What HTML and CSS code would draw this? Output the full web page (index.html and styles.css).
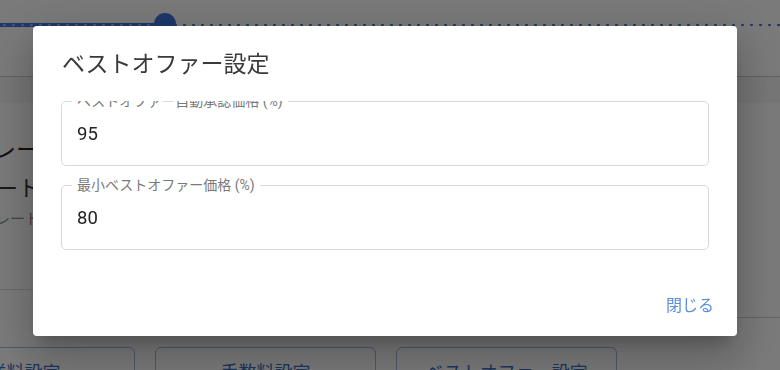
FILE: index.html
```html
<!DOCTYPE html>
<html lang="ja">
<head>
  <meta charset="UTF-8">
  <meta name="viewport" content="width=device-width, initial-scale=1.0">
  <title>ベストオファー設定</title>
  <link rel="stylesheet" href="styles.css">
</head>
<body>
  <div class="page">
    <div class="topbar"></div>
    <div class="track">
      <div class="track-fill"></div>
      <div class="knob"></div>
    </div>
    <div class="header"></div>
    <div class="subbar"></div>
    <div class="main">
      <div class="side">
        <div class="side-title">オファーレー</div>
        <div class="side-sub">ベストオファーレート</div>
        <div class="side-note">自動承認レート</div>
      </div>
      <div class="panel"></div>
    </div>
    <div class="actions-row">
      <button class="outline-btn">送料設定</button>
      <button class="outline-btn">手数料設定</button>
      <button class="outline-btn">ベストオファー設定</button>
    </div>
  </div>

  <div class="backdrop">
    <div class="dialog">
      <h2 class="dialog-title">ベストオファー設定</h2>
      <div class="dialog-content">
        <div class="field">
          <span class="field-label">ベストオファー自動承認価格 (%)</span>
          <div class="field-value">95</div>
        </div>
        <div class="field">
          <span class="field-label">最小ベストオファー価格 (%)</span>
          <div class="field-value">80</div>
        </div>
      </div>
      <div class="dialog-actions">
        <button class="text-btn">閉じる</button>
      </div>
    </div>
  </div>
</body>
</html>
```

FILE: styles.css
```css
body{
  margin: 0;
  background: #f5f5f5;
  font-family: Roboto, "Noto Sans CJK JP", sans-serif;
  overflow: hidden;
}
.page{
  width: 780px;
  height: 370px;
}
.topbar{
  height: 23px;
}
.track{
  position: relative;
  height: 4px;
  background-image: radial-gradient(circle, #3b6fd4 1px, transparent 1.6px);
  background-size: 9px 4px;
}
.track-fill{
  width: 160px;
  height: 4px;
  background-color: #3b6fd4;
  background-image: radial-gradient(circle, #8fb0ea 1px, transparent 1.6px);
  background-size: 9px 4px;
}
.knob{
  position: absolute;
  left: 154px;
  top: -10px;
  width: 22px;
  height: 22px;
  border-radius: 50%;
  background: #3b6fd4;
}
.header{
  height: 49px;
  border-bottom: 1px solid #c4c4c4;
}
.subbar{
  height: 26px;
  background: #ececec;
}
.main{
  display: flex;
  height: 244px;
}
.side{
  width: 40px;
  height: 186px;
  border-bottom: 1px solid #d8d8d8;
  display: flex;
  flex-direction: column;
  align-items: flex-end;
  overflow: hidden;
  white-space: nowrap;
}
.side-title{
  margin-top: 32px;
  font-size: 24px;
  line-height: 30px;
  color: #222;
}
.side-sub{
  margin-top: 10px;
  font-size: 22px;
  line-height: 28px;
  color: #333;
}
.side-note{
  margin-top: 6px;
  font-size: 15px;
  line-height: 20px;
  color: #888;
}
.panel{
  flex: 1;
  height: 214px;
  border-bottom: 1px solid #c8c8c8;
}
.actions-row{
  display: flex;
  gap: 20px;
  margin-left: -86px;
}
.outline-btn{
  width: 221px;
  height: 40px;
  border: 1px solid #9ab3dc;
  border-radius: 6px;
  background: transparent;
  color: #3a6ab8;
  font-family: "Noto Sans CJK JP", sans-serif;
  font-size: 18px;
  padding: 8px 0 0;
  line-height: 24px;
}

.backdrop{
  position: fixed;
  inset: 0;
  background: rgba(0, 0, 0, 0.5);
}
.dialog{
  width: 704px;
  height: 310px;
  margin: 26px 0 0 33px;
  background: #fff;
  border-radius: 4px;
  box-shadow: 0 11px 15px -7px rgba(0,0,0,0.2), 0 24px 38px 3px rgba(0,0,0,0.14), 0 9px 46px 8px rgba(0,0,0,0.12);
  display: flex;
  flex-direction: column;
}
.dialog-title{
  margin: 0;
  padding: 18px 29px 20px;
  font-family: "Noto Sans CJK JP", sans-serif;
  font-size: 23px;
  font-weight: 400;
  line-height: 37px;
  color: #3a3a3a;
}
.dialog-content{
  flex: 1;
  overflow: hidden;
  padding: 0 28px;
  display: flex;
  flex-direction: column;
  gap: 19px;
}
.field{
  position: relative;
  flex: none;
  height: 63px;
  border: 1px solid #d9d9d9;
  border-radius: 5px;
  padding: 0 15px;
  display: flex;
  align-items: center;
}
.field-label{
  position: absolute;
  left: 10px;
  top: -10px;
  padding: 0 5px;
  background: #fff;
  font-size: 14px;
  line-height: 18px;
  color: #7a7a7a;
  font-family: Roboto, "Noto Sans CJK JP", sans-serif;
}
.field-value{
  font-size: 18.5px;
  color: #222;
}
.dialog-actions{
  display: flex;
  justify-content: flex-end;
  padding: 0 15px 14px;
}
.text-btn{
  height: 36px;
  padding: 0 8px;
  border: none;
  background: transparent;
  font-family: "Noto Sans CJK JP", sans-serif;
  font-size: 16px;
  color: #5b8fdc;
}
```
